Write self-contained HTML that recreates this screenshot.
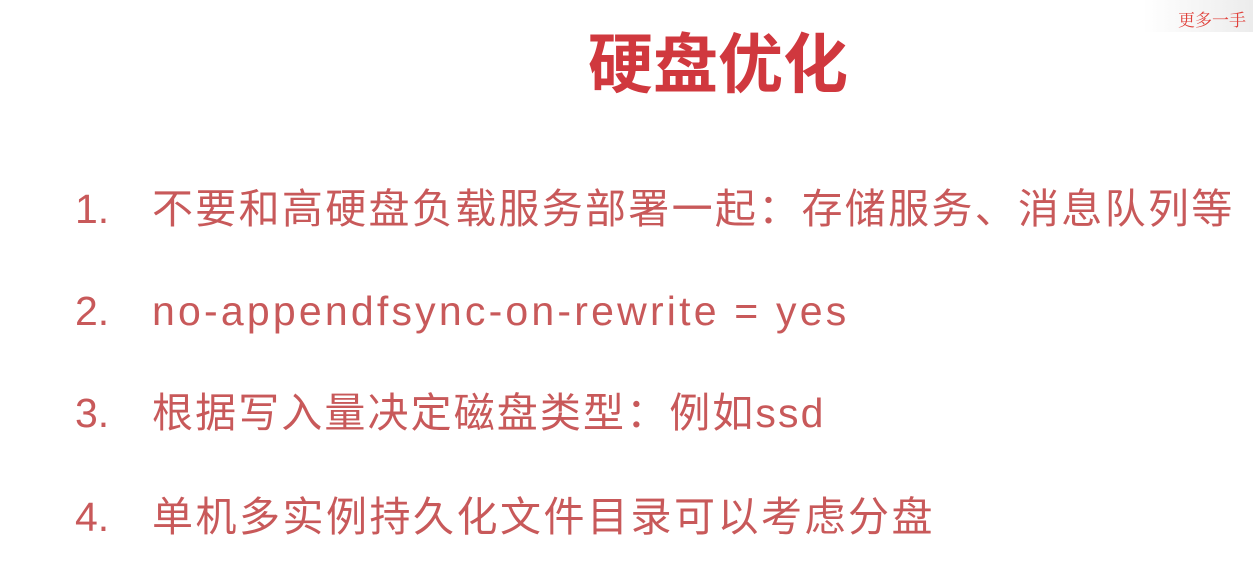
<!DOCTYPE html>
<html><head><meta charset="utf-8"><style>
html,body{margin:0;padding:0;}
body{width:1253px;height:584px;background:#fff;position:relative;overflow:hidden;font-family:"Liberation Sans","Noto Sans CJK SC",sans-serif;}
.wm{position:absolute;right:0;top:0;width:110px;height:32px;background:linear-gradient(90deg,#fff,#ececec);}
.wm span{position:absolute;left:35px;top:6px;font-family:"Noto Serif CJK SC",serif;font-size:17px;color:#e0403a;white-space:nowrap;}
h1{position:absolute;left:588px;top:20px;margin:0;font-size:65px;font-weight:bold;color:#d0383e;line-height:90px;}
.l{position:absolute;left:0;font-size:41px;color:#c8595a;line-height:50px;white-space:nowrap;}
.n{position:absolute;left:75px;}
.t{position:absolute;left:152px;}
</style></head><body>
<div class="wm"><span>更多一手</span></div>
<h1>硬盘优化</h1>
<div class="l" style="top:184px"><span class="n">1.</span><span class="t" style="letter-spacing:2.3px">不要和高硬盘负载服务部署一起：存储服务、消息队列等</span></div>
<div class="l" style="top:286px"><span class="n">2.</span><span class="t" style="letter-spacing:3.2px">no-appendfsync-on-rewrite = yes</span></div>
<div class="l" style="top:388px"><span class="n">3.</span><span class="t" style="letter-spacing:2.1px">根据写入量决定磁盘类型：例如ssd</span></div>
<div class="l" style="top:492px"><span class="n">4.</span><span class="t" style="letter-spacing:2.5px">单机多实例持久化文件目录可以考虑分盘</span></div>
</body></html>
